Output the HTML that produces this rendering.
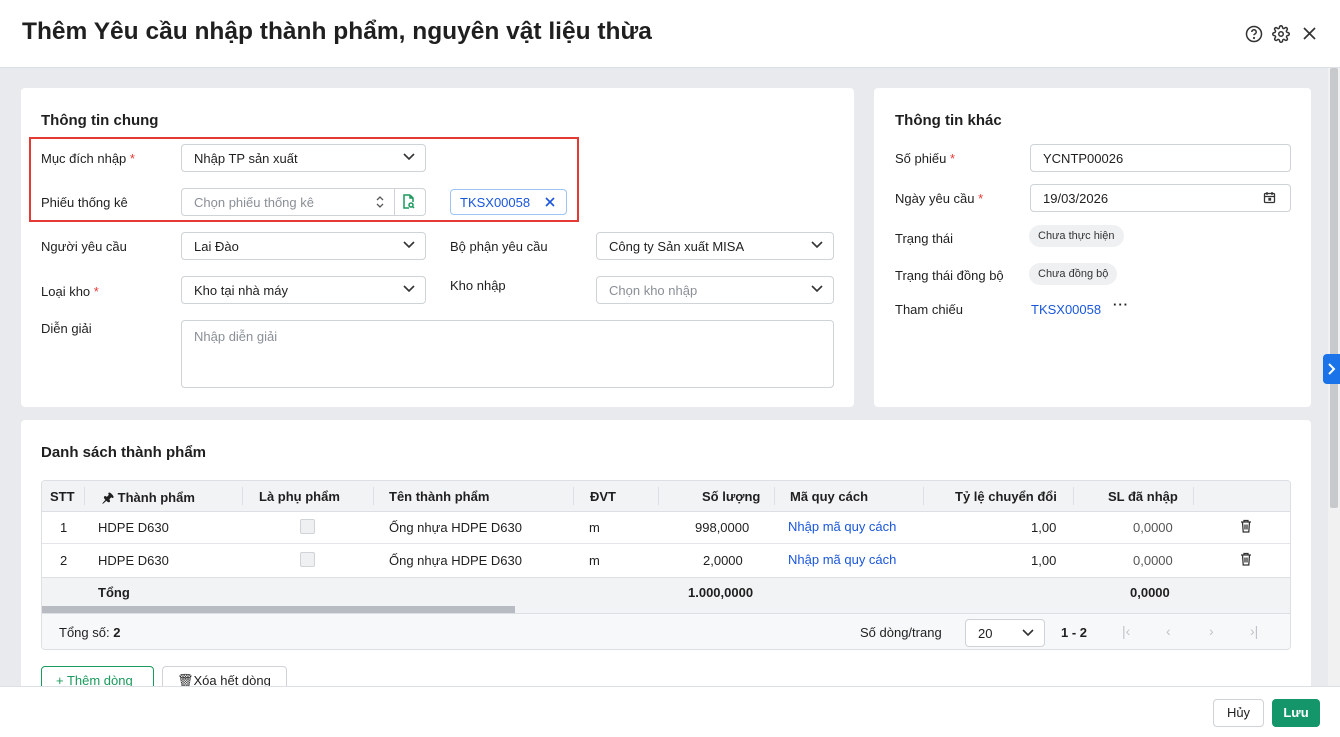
<!DOCTYPE html>
<html><head><meta charset="utf-8"><style>
*{box-sizing:border-box;margin:0;padding:0}
body{width:1340px;height:737px;overflow:hidden;background:#e9eaed;font-family:"Liberation Sans",Arial,sans-serif;font-size:13px;color:#1f1f1f;position:relative}
.a{position:absolute}
.card{position:absolute;background:#fff;border-radius:4px}
.h{font-size:15px;font-weight:bold;color:#1f1f1f}
.lbl{position:absolute;font-size:13px;color:#1f1f1f}
.req{color:#e53935}
.inp{position:absolute;height:28px;border:1px solid #cfd2d6;border-radius:4px;background:#fff;padding:6px 12px;font-size:13px;color:#1f1f1f}
.ph{color:#8a8f96}
.chev{position:absolute;right:10px;top:8px;width:12px;height:8px}
.th{position:absolute;font-weight:bold;font-size:13px;top:8px}
.td{position:absolute;font-size:13px}
.sep{position:absolute;top:6px;width:1px;height:18px;background:#dcdfe3}
.badge{position:absolute;background:#eef0f2;border-radius:12px;font-size:11px;padding:5px 9px;color:#333}
</style></head><body>
<div class="a" style="left:0;top:0;width:1340px;height:68px;background:#fff;border-bottom:1px solid #dcdfe3"></div>
<div class="a" style="left:22px;top:18px;font-size:24.5px;font-weight:bold;color:#1f1f1f">Thêm Yêu cầu nhập thành phẩm, nguyên vật liệu thừa</div>
<svg class="a" style="left:1245px;top:25px" width="18" height="18" viewBox="0 0 18 18" fill="none" stroke="#333" stroke-width="1.5"><circle cx="9" cy="9" r="7.5"/><path d="M6.8 7a2.2 2.2 0 1 1 3 2c-.6.3-.8.7-.8 1.3"/><circle cx="9" cy="13" r=".4" fill="#333"/></svg>
<svg class="a" style="left:1272px;top:25px" width="18" height="18" viewBox="0 0 24 24" fill="none" stroke="#333" stroke-width="2"><circle cx="12" cy="12" r="3"/><path d="M19.4 15a1.7 1.7 0 0 0 .3 1.8l.1.1a2 2 0 1 1-2.8 2.8l-.1-.1a1.7 1.7 0 0 0-1.8-.3 1.7 1.7 0 0 0-1 1.5V21a2 2 0 1 1-4 0v-.1a1.7 1.7 0 0 0-1.1-1.5 1.7 1.7 0 0 0-1.8.3l-.1.1a2 2 0 1 1-2.8-2.8l.1-.1a1.7 1.7 0 0 0 .3-1.8 1.7 1.7 0 0 0-1.5-1H3a2 2 0 1 1 0-4h.1a1.7 1.7 0 0 0 1.5-1.1 1.7 1.7 0 0 0-.3-1.800l-.1-.1a2 2 0 1 1 2.8-2.8l.1.1a1.7 1.7 0 0 0 1.8.3H9a1.7 1.7 0 0 0 1-1.5V3a2 2 0 1 1 4 0v.1a1.7 1.7 0 0 0 1 1.5 1.7 1.7 0 0 0 1.8-.3l.1-.1a2 2 0 1 1 2.8 2.8l-.1.1a1.7 1.7 0 0 0-.3 1.8V9a1.7 1.7 0 0 0 1.5 1H21a2 2 0 1 1 0 4h-.1a1.7 1.7 0 0 0-1.5 1z"/></svg>
<svg class="a" style="left:1302px;top:26px" width="15" height="15" viewBox="0 0 15 15" stroke="#333" stroke-width="1.7"><path d="M2 2l11 11M13 2L2 13"/></svg>

<div class="a" style="left:1328px;top:68px;width:12px;height:619px;background:#f1f1f1"></div>
<div class="a" style="left:1330px;top:68px;width:8px;height:440px;background:#c7c9cc;border-radius:2px"></div>
<div class="a" style="left:1323px;top:354px;width:17px;height:30px;background:#1a73e8;border-radius:4px 0 0 4px"></div>
<svg class="a" style="left:1326px;top:363px" width="10" height="12" viewBox="0 0 10 12" fill="none" stroke="#fff" stroke-width="2"><path d="M3 1l5 5-5 5"/></svg>

<div class="card" style="left:21px;top:88px;width:833px;height:319px"></div>
<div class="a h" style="left:41px;top:112px">Thông tin chung</div>
<div class="a" style="left:29px;top:137px;width:550px;height:85px;border:2px solid #e53935"></div>
<div class="lbl" style="left:41px;top:151px">Mục đích nhập <span class="req">*</span></div>
<div class="inp" style="left:181px;top:144px;width:245px">Nhập TP sản xuất<svg class="chev" viewBox="0 0 12 8" fill="none" stroke="#333" stroke-width="1.6"><path d="M1 1l5 5 5-5"/></svg></div>
<div class="lbl" style="left:41px;top:195px">Phiếu thống kê</div>
<div class="inp ph" style="left:181px;top:188px;width:245px">Chọn phiếu thống kê</div>
<div class="a" style="left:394px;top:189px;width:1px;height:26px;background:#cfd2d6"></div>
<svg class="a" style="left:375px;top:195px" width="10" height="14" viewBox="0 0 10 14" fill="none" stroke="#555" stroke-width="1.3"><path d="M2 5l3-3 3 3M2 9l3 3 3-3"/></svg>
<svg class="a" style="left:402px;top:194px" width="13" height="15" viewBox="0 0 13 15" fill="none" stroke="#1a9a5c" stroke-width="1.5"><path d="M8 1H2v13h5M8 1l3 3v4M8 1v3h3"/><circle cx="9" cy="11" r="2"/><path d="M10.5 12.5l1.5 1.5"/></svg>
<div class="a" style="left:450px;top:189px;width:117px;height:26px;border:1px solid #9ec3f5;border-radius:4px;color:#1a56db;font-size:13px;padding:5px 9px">TKSX00058</div>
<svg class="a" style="left:545px;top:197px" width="10" height="10" viewBox="0 0 10 10" stroke="#1a56db" stroke-width="1.6"><path d="M1 1l8 8M9 1L1 9"/></svg>

<div class="lbl" style="left:41px;top:239px">Người yêu cầu</div>
<div class="inp" style="left:181px;top:232px;width:245px">Lai Đào<svg class="chev" viewBox="0 0 12 8" fill="none" stroke="#333" stroke-width="1.6"><path d="M1 1l5 5 5-5"/></svg></div>
<div class="lbl" style="left:450px;top:239px">Bộ phận yêu cầu</div>
<div class="inp" style="left:596px;top:232px;width:238px">Công ty Sản xuất MISA<svg class="chev" viewBox="0 0 12 8" fill="none" stroke="#333" stroke-width="1.6"><path d="M1 1l5 5 5-5"/></svg></div>
<div class="lbl" style="left:41px;top:284px">Loại kho <span class="req">*</span></div>
<div class="inp" style="left:181px;top:276px;width:245px">Kho tại nhà máy<svg class="chev" viewBox="0 0 12 8" fill="none" stroke="#333" stroke-width="1.6"><path d="M1 1l5 5 5-5"/></svg></div>
<div class="lbl" style="left:450px;top:278px">Kho nhập</div>
<div class="inp ph" style="left:596px;top:276px;width:238px">Chọn kho nhập<svg class="chev" viewBox="0 0 12 8" fill="none" stroke="#333" stroke-width="1.6"><path d="M1 1l5 5 5-5"/></svg></div>
<div class="lbl" style="left:41px;top:321px">Diễn giải</div>
<div class="inp ph" style="left:181px;top:320px;width:653px;height:68px;padding-top:8px">Nhập diễn giải</div>

<div class="card" style="left:874px;top:88px;width:437px;height:319px"></div>
<div class="a h" style="left:895px;top:112px">Thông tin khác</div>
<div class="lbl" style="left:895px;top:151px">Số phiếu <span class="req">*</span></div>
<div class="inp" style="left:1030px;top:144px;width:261px">YCNTP00026</div>
<div class="lbl" style="left:895px;top:191px">Ngày yêu cầu <span class="req">*</span></div>
<div class="inp" style="left:1030px;top:184px;width:261px">19/03/2026</div>
<svg class="a" style="left:1263px;top:191px" width="13" height="13" viewBox="0 0 13 13" fill="none" stroke="#333" stroke-width="1.3"><rect x="1.5" y="2.5" width="10" height="9" rx="1"/><path d="M1.5 5.5h10M4 1v3M9 1v3"/><rect x="6" y="7.5" width="1.5" height="1.5" fill="#333"/></svg>
<div class="lbl" style="left:895px;top:231px">Trạng thái</div>
<div class="badge" style="left:1029px;top:225px">Chưa thực hiện</div>
<div class="lbl" style="left:895px;top:268px">Trạng thái đồng bộ</div>
<div class="badge" style="left:1029px;top:263px">Chưa đồng bộ</div>
<div class="lbl" style="left:895px;top:302px">Tham chiếu</div>
<div class="lbl" style="left:1031px;top:302px;color:#1a56db">TKSX00058</div>
<div class="lbl" style="left:1113px;top:297px;font-weight:bold;letter-spacing:1px">···</div>

<div class="card" style="left:21px;top:420px;width:1290px;height:280px"></div>
<div class="a h" style="left:41px;top:444px">Danh sách thành phẩm</div>
<div class="a" style="left:41px;top:480px;width:1250px;height:170px;border:1px solid #dcdfe3;border-radius:4px;background:#fff;overflow:hidden">
 <div class="a" style="left:0;top:0;width:1250px;height:31px;background:#f2f3f5;border-bottom:1px solid #dcdfe3"></div>
 <div class="th" style="left:8px">STT</div><div class="sep" style="left:42px"></div>
 <div class="th" style="left:60px">🖈 Thành phẩm</div><div class="sep" style="left:200px"></div>
 <div class="th" style="left:217px">Là phụ phẩm</div><div class="sep" style="left:331px"></div>
 <div class="th" style="left:347px">Tên thành phẩm</div><div class="sep" style="left:531px"></div>
 <div class="th" style="left:548px">ĐVT</div><div class="sep" style="left:616px"></div>
 <div class="th" style="left:660px">Số lượng</div><div class="sep" style="left:732px"></div>
 <div class="th" style="left:748px">Mã quy cách</div><div class="sep" style="left:881px"></div>
 <div class="th" style="left:913px">Tỷ lệ chuyển đổi</div><div class="sep" style="left:1031px"></div>
 <div class="th" style="left:1066px">SL đã nhập</div><div class="sep" style="left:1151px"></div>

 <div class="td" style="left:18px;top:39px">1</div>
 <div class="td" style="left:56px;top:39px">HDPE D630</div>
 <div class="a" style="left:258px;top:38px;width:15px;height:15px;border:1px solid #d0d3d7;border-radius:2px;background:#eef0f2"></div>
 <div class="td" style="left:347px;top:39px">Ống nhựa HDPE D630</div>
 <div class="td" style="left:547px;top:39px">m</div>
 <div class="td" style="left:653px;top:39px">998,0000</div>
 <div class="td" style="left:746px;top:38px;color:#1a56db">Nhập mã quy cách</div>
 <div class="td" style="left:989px;top:39px">1,00</div>
 <div class="td" style="left:1091px;top:39px;color:#555">0,0000</div>
 <svg class="a" style="left:1198px;top:38px" width="12" height="14" viewBox="0 0 12 14" fill="none" stroke="#333" stroke-width="1.3"><path d="M1 3h10M4 3V1.5h4V3M2.5 3l.7 10h5.6l.7-10M5 5.5v5M7 5.5v5"/></svg>
 <div class="a" style="left:0;top:62px;width:1250px;height:1px;background:#e3e5e8"></div>
 <div class="td" style="left:18px;top:72px">2</div>
 <div class="td" style="left:56px;top:72px">HDPE D630</div>
 <div class="a" style="left:258px;top:71px;width:15px;height:15px;border:1px solid #d0d3d7;border-radius:2px;background:#eef0f2"></div>
 <div class="td" style="left:347px;top:72px">Ống nhựa HDPE D630</div>
 <div class="td" style="left:547px;top:72px">m</div>
 <div class="td" style="left:661px;top:72px">2,0000</div>
 <div class="td" style="left:746px;top:71px;color:#1a56db">Nhập mã quy cách</div>
 <div class="td" style="left:989px;top:72px">1,00</div>
 <div class="td" style="left:1091px;top:72px;color:#555">0,0000</div>
 <svg class="a" style="left:1198px;top:71px" width="12" height="14" viewBox="0 0 12 14" fill="none" stroke="#333" stroke-width="1.3"><path d="M1 3h10M4 3V1.5h4V3M2.5 3l.7 10h5.6l.7-10M5 5.5v5M7 5.5v5"/></svg>
 <div class="a" style="left:0;top:96px;width:1250px;height:36px;background:#f2f3f5;border-top:1px solid #dcdfe3"></div>
 <div class="td" style="left:56px;top:104px;font-weight:bold">Tổng</div>
 <div class="td" style="left:646px;top:104px;font-weight:bold">1.000,0000</div>
 <div class="td" style="left:1088px;top:104px;font-weight:bold">0,0000</div>
 <div class="a" style="left:0;top:125px;width:473px;height:7px;background:#b8bbc1"></div>
 <div class="a" style="left:0;top:132px;width:1250px;height:38px;background:#f7f8f9;border-top:1px solid #dcdfe3"></div>
 <div class="td" style="left:17px;top:144px">Tổng số: <b>2</b></div>
 <div class="td" style="left:818px;top:144px">Số dòng/trang</div>
 <div class="a" style="left:923px;top:138px;width:80px;height:28px;border:1px solid #cfd2d6;border-radius:4px;background:#fff;padding:6px 12px">20<svg class="chev" style="top:9px" viewBox="0 0 12 8" fill="none" stroke="#333" stroke-width="1.6"><path d="M1 1l5 5 5-5"/></svg></div>
 <div class="td" style="left:1019px;top:144px;font-weight:bold">1 - 2</div>
 <div class="td" style="left:1080px;top:142px;color:#c0c3c8;font-size:14px">|‹</div>
 <div class="td" style="left:1124px;top:142px;color:#c0c3c8;font-size:14px">‹</div>
 <div class="td" style="left:1167px;top:142px;color:#c0c3c8;font-size:14px">›</div>
 <div class="td" style="left:1208px;top:142px;color:#c0c3c8;font-size:14px">›|</div>
</div>
<div class="a" style="left:41px;top:666px;width:113px;height:28px;border:1px solid #1a9a5c;border-radius:4px;color:#1a9a5c;padding:6px 14px;font-size:13px">+ Thêm dòng</div>
<div class="a" style="left:162px;top:666px;width:125px;height:28px;border:1px solid #cfd2d6;border-radius:4px;padding:6px 14px;font-size:13px;background:#fff">🗑Xóa hết dòng</div>

<div class="a" style="left:0;top:686px;width:1340px;height:51px;background:#fff;border-top:1px solid #dcdfe3"></div>
<div class="a" style="left:1213px;top:699px;width:51px;height:28px;border:1px solid #cfd2d6;border-radius:4px;text-align:center;line-height:26px;font-size:13px">Hủy</div>
<div class="a" style="left:1272px;top:699px;width:48px;height:28px;background:#14966a;border-radius:4px;text-align:center;line-height:28px;color:#fff;font-weight:bold;font-size:13px">Lưu</div>
</body></html>
